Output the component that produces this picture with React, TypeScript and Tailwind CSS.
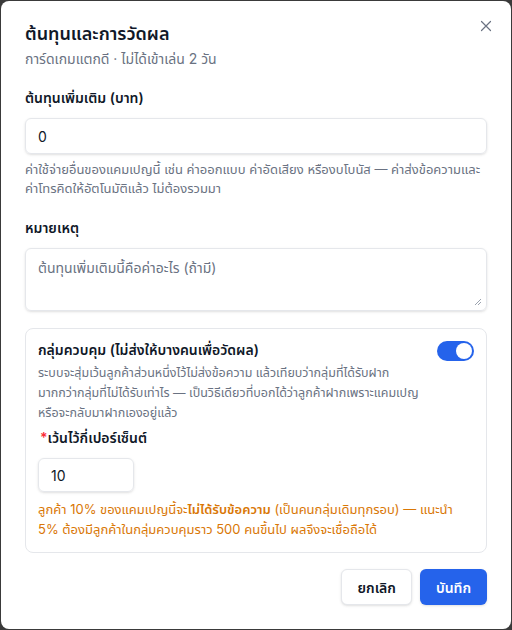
import React from "react";

export default function App() {
  return (
    <div className="w-[512px] h-[630px] bg-[#3a3a3a] p-px" style={{ fontFamily: "Inter, 'Noto Sans', 'Noto Sans Thai', sans-serif" }}>
      <div className="relative h-full rounded-lg bg-white px-6 pt-5">
        <button className="absolute right-[19px] top-[19px] text-gray-500">
          <svg width="12" height="12" viewBox="0 0 12 12" fill="none" stroke="currentColor" strokeWidth="1.2" strokeLinecap="round">
            <path d="M1.5 1.5L10.5 10.5M10.5 1.5L1.5 10.5" />
          </svg>
        </button>
        <h2 className="text-[18px] font-semibold text-gray-900 leading-[26px]">ต้นทุนและการวัดผล</h2>
        <p className="mt-0.5 text-[14px] text-gray-500 leading-5">การ์ดเกมแตกดี · ไม่ได้เข้าเล่น 2 วัน</p>

        <div className="mt-[19px] text-[14px] font-semibold text-gray-900 leading-5">ต้นทุนเพิ่มเติม (บาท)</div>
        <div className="mt-2.5 h-[36px] rounded-md border border-gray-200 shadow-sm flex items-center px-3 text-[14px] text-gray-900">0</div>
        <p className="mt-1.5 text-[13px] text-gray-500 leading-[19px]">ค่าใช้จ่ายอื่นของแคมเปญนี้ เช่น ค่าออกแบบ ค่าอัดเสียง หรืองบโบนัส — ค่าส่งข้อความและค่าโทรคิดให้อัตโนมัติแล้ว ไม่ต้องรวมมา</p>

        <div className="mt-5 text-[14px] font-semibold text-gray-900 leading-5">หมายเหตุ</div>
        <div className="relative mt-2.5 h-[63px] rounded-md border border-gray-200 shadow-sm px-3 py-2 text-[14px] text-gray-500">
          ต้นทุนเพิ่มเติมนี้คือค่าอะไร (ถ้ามี)
          <svg className="absolute right-1 bottom-1" width="8" height="8" viewBox="0 0 8 8" stroke="#9ca3af" strokeWidth="1">
            <path d="M7 1L1 7M7 4L4 7" />
          </svg>
        </div>

        <div className="mt-[17px] rounded-lg border border-gray-200 px-3 pt-[11px] pb-[13px]">
          <div className="flex items-start justify-between">
            <div className="text-[14px] font-semibold text-gray-900 leading-5">กลุ่มควบคุม (ไม่ส่งให้บางคนเพื่อวัดผล)</div>
            <div className="mt-px w-[37px] h-[20px] rounded-full bg-[#2563eb] flex items-center justify-end px-[2px]">
              <div className="w-[16px] h-[16px] rounded-full bg-white" />
            </div>
          </div>
          <p className="mt-[2px] pr-12 text-[12.5px] text-gray-500 leading-[20px]">ระบบจะสุ่มเว้นลูกค้าส่วนหนึ่งไว้ไม่ส่งข้อความ แล้วเทียบว่ากลุ่มที่ได้รับฝากมากกว่ากลุ่มที่ไม่ได้รับเท่าไร — เป็นวิธีเดียวที่บอกได้ว่าลูกค้าฝากเพราะแคมเปญหรือจะกลับมาฝากเองอยู่แล้ว</p>
          <div className="mt-[5px] text-[14px] font-semibold text-gray-900 leading-5 pl-0.5"><span className="text-red-500">*</span>เว้นไว้กี่เปอร์เซ็นต์</div>
          <div className="mt-2.5 w-[96px] h-[34px] rounded-md border border-gray-200 shadow-sm flex items-center px-3 text-[14px] text-gray-900">10</div>
          <p className="mt-[7px] text-[13px] text-[#d97706] leading-[20px]">ลูกค้า 10% ของแคมเปญนี้จะ<b className="font-semibold">ไม่ได้รับข้อความ</b> (เป็นคนกลุ่มเดิมทุกรอบ) — แนะนำ 5% ต้องมีลูกค้าในกลุ่มควบคุมราว 500 คนขึ้นไป ผลจึงจะเชื่อถือได้</p>
        </div>

        <div className="mt-4 flex justify-end gap-2">
          <button className="h-[36px] px-[15px] rounded-md border border-gray-200 bg-white text-[14px] font-semibold text-gray-900 shadow-sm">ยกเลิก</button>
          <button className="h-[36px] px-[16px] rounded-md bg-[#2563eb] text-[14px] font-semibold text-white shadow-sm">บันทึก</button>
        </div>
      </div>
    </div>
  );
}
